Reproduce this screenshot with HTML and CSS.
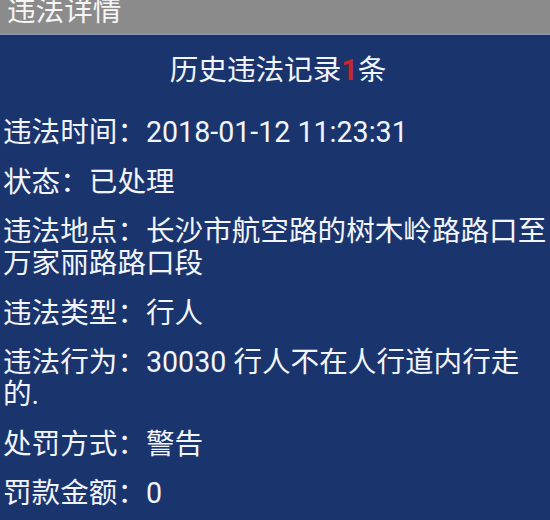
FILE: index.html
```html
<!DOCTYPE html>
<html lang="zh-CN">
<head>
<meta charset="utf-8">
<title>违法详情</title>
<link rel="stylesheet" href="styles.css">
</head>
<body>
<header class="bar">
  <h1 class="bar-title">违法详情</h1>
</header>
<main class="detail">
  <h2 class="summary">历史违法记录<span class="count">1</span>条</h2>
  <div class="rows">
    <p class="row">违法时间：2018-01-12 11:23:31</p>
    <p class="row">状态：已处理</p>
    <p class="row">违法地点：长沙市航空路的树木岭路路口至万家丽路路口段</p>
    <p class="row">违法类型：行人</p>
    <p class="row">违法行为：30030 行人不在人行道内行走的.</p>
    <p class="row">处罚方式：警告</p>
    <p class="row">罚款金额：0</p>
  </div>
</main>
</body>
</html>
```

FILE: styles.css
```css
html, body {
  margin: 0;
  padding: 0;
}
body {
  width: 550px;
  height: 520px;
  overflow: hidden;
  background: #1a346e;
  color: #f2f5fb;
  font-family: Roboto, "Noto Sans CJK SC", sans-serif;
}
.bar {
  height: 33px;
  background: #8b8b8b;
  border-bottom: 2px solid #8396b6;
  overflow: hidden;
}
.bar-title {
  margin: 0;
  padding-left: 7px;
  font-size: 28.6px;
  font-weight: 400;
  line-height: 22px;
  color: #f6f6f6;
}
.detail {
  padding: 19px 0 0 3px;
}
.summary {
  margin: 0;
  text-align: center;
  font-size: 28.6px;
  font-weight: 400;
  line-height: 32px;
  padding-left: 3px;
}
.count {
  color: #c8262c;
  font-weight: 700;
}
.rows {
  margin-top: 30px;
  display: flex;
  flex-direction: column;
  gap: 17.5px;
}
.row {
  margin: 0;
  font-size: 28.6px;
  line-height: 32px;
}
```
